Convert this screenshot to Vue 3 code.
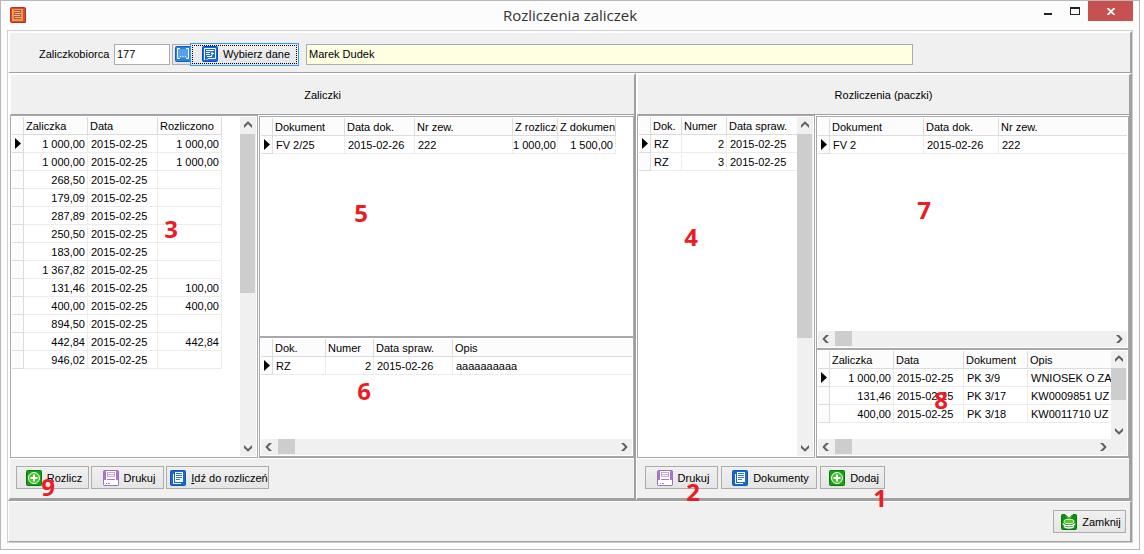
<script setup>
import { h } from 'vue'

const advances = {
  cols: [
    { t: 'Zaliczka', w: 64, r: true }, { t: 'Data', w: 70 }, { t: 'Rozliczono', w: 64, r: true },
  ],
  rows: [
    ['1 000,00', '2015-02-25', '1 000,00'],
    ['1 000,00', '2015-02-25', '1 000,00'],
    ['268,50', '2015-02-25', ''],
    ['179,09', '2015-02-25', ''],
    ['287,89', '2015-02-25', ''],
    ['250,50', '2015-02-25', ''],
    ['183,00', '2015-02-25', ''],
    ['1 367,82', '2015-02-25', ''],
    ['131,46', '2015-02-25', '100,00'],
    ['400,00', '2015-02-25', '400,00'],
    ['894,50', '2015-02-25', ''],
    ['442,84', '2015-02-25', '442,84'],
    ['946,02', '2015-02-25', ''],
  ],
}
const advanceDocs = {
  cols: [
    { t: 'Dokument', w: 72 }, { t: 'Data dok.', w: 70 }, { t: 'Nr zew.', w: 98 },
    { t: 'Z rozlicze', w: 45, r: true }, { t: 'Z dokumen', w: 58, r: true },
  ],
  rows: [['FV 2/25', '2015-02-26', '222', '1 000,00', '1 500,00']],
}
const advanceReports = {
  cols: [
    { t: 'Dok.', w: 53 }, { t: 'Numer', w: 48, r: true }, { t: 'Data spraw.', w: 79 }, { t: 'Opis', w: 0 },
  ],
  rows: [['RZ', '2', '2015-02-26', 'aaaaaaaaaa']],
}
const batches = {
  cols: [{ t: 'Dok.', w: 31 }, { t: 'Numer', w: 45, r: true }, { t: 'Data spraw.', w: 0 }],
  rows: [['RZ', '2', '2015-02-25'], ['RZ', '3', '2015-02-25']],
}
const batchDocs = {
  cols: [{ t: 'Dokument', w: 94 }, { t: 'Data dok.', w: 75 }, { t: 'Nr zew.', w: 0 }],
  rows: [['FV 2', '2015-02-26', '222']],
}
const batchAdvances = {
  cols: [
    { t: 'Zaliczka', w: 64, r: true }, { t: 'Data', w: 70 }, { t: 'Dokument', w: 64 }, { t: 'Opis', w: 0 },
  ],
  rows: [
    ['1 000,00', '2015-02-25', 'PK 3/9', 'WNIOSEK O ZA'],
    ['131,46', '2015-02-25', 'PK 3/17', 'KW0009851 UZ'],
    ['400,00', '2015-02-25', 'PK 3/18', 'KW0011710 UZ'],
  ],
}

const marks = [
  { n: 1, x: 879, y: 497 }, { n: 2, x: 692, y: 491 }, { n: 3, x: 170, y: 228 },
  { n: 4, x: 690, y: 236 }, { n: 5, x: 360, y: 212 }, { n: 6, x: 363, y: 390 },
  { n: 7, x: 923, y: 209 }, { n: 8, x: 940, y: 399 }, { n: 9, x: 47, y: 486 },
]

function DataGrid({ data, label }) {
  const fluid = data.cols.some((c) => !c.w)
  const total = data.cols.reduce((s, c) => s + c.w, 12)
  return h('table', { class: ['tbl', { fluid }], 'aria-label': label, style: fluid ? null : { width: total + 'px' } }, [
    h('colgroup', [
      h('col', { class: 'ind' }),
      ...data.cols.map((c) => h('col', { style: c.w ? { width: c.w + 'px' } : null })),
    ]),
    h('thead', h('tr', [h('td', { class: 'mark-cell' }), ...data.cols.map((c) => h('th', { scope: 'col' }, c.t))])),
    h('tbody', data.rows.map((row, i) => h('tr', [
      h('td', { class: 'mark-cell' }, i === 0
        ? h('svg', { width: 11, height: 17, viewBox: '0 0 11 17' }, h('path', { d: 'M3 3v11l6-5.5z', fill: '#000' }))
        : ''),
      ...row.map((v, j) => h('td', { class: { num: data.cols[j].r } }, v)),
    ]))),
  ])
}
DataGrid.props = ['data', 'label']

const arrows = {
  up: 'M4 10.500 8 6.500l4 4v-3L8 3.800 4 7.500z',
  down: 'M4 5.500 8 9.500l4-4v3L8 12.200 4 8.500z',
  left: 'M10.500 4 6.500 8l4 4h-3L3.800 8 7.500 4z',
  right: 'M5.500 4 9.500 8l-4 4h3L12.200 8 8.500 4z',
}
function ScrollBar({ dir, size }) {
  const v = dir === 'v'
  const arrow = (d) => h('svg', { class: 'arrow', width: 16, height: 16, viewBox: '0 0 16 16' }, h('path', { d: arrows[d], fill: '#606060' }))
  return h('div', { class: ['sb', dir] }, [
    arrow(v ? 'up' : 'left'),
    h('div', { class: 'lane' }, h('div', { class: 'thumb', style: v ? { height: size } : { width: size } })),
    arrow(v ? 'down' : 'right'),
  ])
}
ScrollBar.props = ['dir', 'size']

function Icon({ name }) {
  const box = (c, edge) => h('rect', { x: 0.5, y: 0.5, width: 15, height: 15, rx: 1, fill: c, stroke: edge })
  const line = (d, s, w = 1) => h('path', { d, stroke: s, 'stroke-width': w, fill: 'none' })
  const parts = {
    add: [
      box('#18a018', '#087808'),
      h('circle', { cx: 8, cy: 8, r: 5.5, fill: '#4cc02c', stroke: '#fff' }),
      line('M8 4.500v7M4.500 8h7', '#fff', 2),
    ],
    print: [
      box('#a878c8', '#a070c0'),
      h('path', { d: 'M3 1h10v8H3z', fill: '#fff' }),
      h('path', { d: 'M4 2h8v5H4z', fill: '#c8a8dc' }),
      line('M5 3.500h6M5 5.500h6', '#fff'),
      h('path', { d: 'M1 10h2V9h1v1h8V9h1v1h2v5H1z', fill: '#fff' }),
      line('M3 13.500h1M5 13.500h2', '#a878c8'),
    ],
    docs: [
      box('#1868d0', '#0c58c0'),
      h('path', { d: 'M5 2h8v10H5z', fill: '#fff' }),
      line('M6 3.500h6M6 5.500h6M6 7.500h6M6 9.500h4', '#2878e0'),
      line('M3.500 4v9.500H11', '#fff'),
    ],
    pick: [
      box('#2880e0', '#1060c0'),
      h('rect', { x: 2, y: 3, width: 12, height: 9, fill: '#58a0e8' }),
      line('M5 2.500H2.500v10H5M11 2.500h2.500v10H11', '#fff'),
      line('M5 10.500h1M7.500 10.500h1M10 10.500h1', '#fff'),
    ],
    choose: [
      box('#1868d8', '#0850b8'),
      line('M2.500 14V2.500h11v10H6L4.500 14', '#fff'),
      line('M4 4.500h8M4 6.500h4M9 7.500h3M4 8.500h4M5 10.500h5', '#fff'),
      line('M9 5.500l2 2-2 2.500', '#fff'),
    ],
    close: [
      box('#109010', '#087808'),
      h('path', { d: 'M4 0h8L9.500 3.500h-3z', fill: '#fff' }),
      line('M5 1l3 3 3-3', '#48b838'),
      h('ellipse', { cx: 8, cy: 7.5, rx: 5, ry: 2.3, fill: '#54cc20', stroke: '#fff' }),
      line('M2 9.500c1 3 11 3 12 0M3 12.500c2 2 8 2 10 0', '#fff', 1.3),
    ],
    app: [
      h('path', { d: 'M2 1h14v15H2z', fill: '#8a6060' }),
      box('#d84838', '#b83030'),
      h('path', { d: 'M2 2h11v12H2z', fill: '#f0a030' }),
      h('path', { d: 'M4 3h7v9H4z', fill: '#b85048' }),
      line('M4 4.500h6M5 6.500h6M4 8.500h6M5 10.500h6', '#e8b890'),
    ],
  }
  return h('svg', { class: 'icon', width: 16, height: 16, viewBox: '0 0 16 16', 'aria-hidden': 'true' }, parts[name])
}
Icon.props = ['name']
</script>

<template>
  <div class="window">
    <header class="titlebar">
      <Icon name="app" />
      <h1>Rozliczenia zaliczek</h1>
      <div class="controls">
        <button type="button" aria-label="Minimalizuj">
          <svg width="8" height="2"><path d="M0 0h8v2H0z" fill="#222" /></svg>
        </button>
        <button type="button" aria-label="Maksymalizuj">
          <svg width="10" height="8"><path d="M0 0h10v8H0zM1 2v5h8V2z" fill="#222" fill-rule="evenodd" /></svg>
        </button>
        <button type="button" class="x" aria-label="Zamknij okno">
          <svg width="8" height="7"><path d="M.5 0 7.500 7M7.500 0 .5 7" stroke="#fff" stroke-width="1.800" /></svg>
        </button>
      </div>
    </header>

    <main class="client">
      <section class="toolbar">
        <label for="person">Zaliczkobiorca</label>
        <input id="person" class="code" type="text" value="177">
        <button type="button" class="btn pick" aria-label="Wyszukaj"><Icon name="pick" /></button>
        <button type="button" class="btn choose"><Icon name="choose" /><span>Wybierz dane</span></button>
        <input class="name" type="text" aria-label="Nazwa" value="Marek Dudek" readonly>
      </section>

      <div class="panels">
        <section class="panel left">
          <h2>Zaliczki</h2>
          <div class="grids">
            <div class="frame main-grid">
              <div class="view">
                <div class="cells"><DataGrid :data="advances" label="Zaliczki" /></div>
                <ScrollBar dir="v" size="52%" />
              </div>
            </div>
            <div class="stack">
              <div class="frame docs-grid">
                <div class="cells"><DataGrid :data="advanceDocs" label="Dokumenty zaliczki" /></div>
              </div>
              <div class="frame low-grid">
                <div class="cells"><DataGrid :data="advanceReports" label="Sprawozdania" /></div>
                <ScrollBar dir="h" size="17px" />
              </div>
            </div>
          </div>
          <div class="actions">
            <button type="button" class="btn std"><Icon name="add" /><span>Rozlicz</span></button>
            <button type="button" class="btn std"><Icon name="print" /><span>Drukuj</span></button>
            <button type="button" class="btn goto"><Icon name="docs" /><span><u>I</u>dź do rozliczeń</span></button>
          </div>
        </section>

        <section class="panel right">
          <h2>Rozliczenia (paczki)</h2>
          <div class="grids">
            <div class="frame main-grid">
              <div class="view">
                <div class="cells"><DataGrid :data="batches" label="Paczki" /></div>
                <ScrollBar dir="v" size="67%" />
              </div>
            </div>
            <div class="stack">
              <div class="frame docs-grid">
                <div class="cells"><DataGrid :data="batchDocs" label="Dokumenty paczki" /></div>
                <ScrollBar dir="h" size="17px" />
              </div>
              <div class="frame low-grid">
                <div class="view">
                  <div class="cells"><DataGrid :data="batchAdvances" label="Zaliczki paczki" /></div>
                  <ScrollBar dir="v" size="60%" />
                </div>
                <ScrollBar dir="h" size="17px" class="cornered" />
              </div>
            </div>
          </div>
          <div class="actions">
            <button type="button" class="btn std"><Icon name="print" /><span>Drukuj</span></button>
            <button type="button" class="btn wide"><Icon name="docs" /><span>Dokumenty</span></button>
            <button type="button" class="btn add"><Icon name="add" /><span>Dodaj</span></button>
          </div>
        </section>
      </div>

      <footer class="bottom">
        <button type="button" class="btn std"><Icon name="close" /><span>Zamknij</span></button>
      </footer>
    </main>

    <span v-for="m in marks" :key="m.n" class="mark" :style="{ left: m.x + 'px', top: m.y + 'px' }">{{ m.n }}</span>
  </div>
</template>

<style>
body { background: #fff; }
</style>

<style scoped>
.window, .window :deep(*) { box-sizing: border-box; }
.window {
  position: relative;
  display: flex;
  flex-direction: column;
  min-height: calc(100vh - 4px);
  margin-right: 4px;
  border: 1px solid #b8b8b8;
  background: #fcfcfc;
  color: #000;
  font: 11px/14px "Liberation Sans", Arial, sans-serif;
}
button, input { font: inherit; color: inherit; margin: 0; border-radius: 0; }
svg { display: block; flex: none; }

.titlebar { display: grid; grid-template-columns: 1fr auto 1fr; height: 29px; padding: 0 6px 0 6px; }
.titlebar > .icon { margin: 6px 0 0 3px; overflow: visible; }
.titlebar h1 { margin: 0; font: 400 15px/28px "Open Sans", "Noto Sans", sans-serif; color: #333; }
.controls { display: flex; justify-content: flex-end; align-items: flex-start; }
.controls button {
  display: flex; align-items: center; justify-content: center;
  width: 27px; height: 20px; padding: 0; border: 0; background: none;
}
.controls button:first-child { align-items: flex-end; padding-bottom: 6px; }
.controls .x { width: 45px; background: #c75050; }

.client {
  flex: 1; display: flex; flex-direction: column;
  margin: 0 6px 6px; border: 1px solid #d0d0d0; background: #f0f0f0;
}
.toolbar {
  display: flex; align-items: center; height: 42px; padding: 3px 217px 0 29px;
  border: solid #fff; border-width: 2px 2px 1px 2px; border-right-color: #a0a0a0; border-bottom-color: #a0a0a0;
}
.toolbar input { height: 21px; padding: 0 2px; border: 1px solid #abadb3; background: #fff; outline: 0; }
.toolbar .code { width: 56px; margin: 0 2px 0 5px; }
.toolbar .name { flex: 1; min-width: 0; margin-left: 7px; background: #ffffe1; }
.toolbar label { width: 70px; white-space: nowrap; }

.btn {
  display: flex; align-items: center; justify-content: center; gap: 5px;
  height: 23px; padding: 0 0 0 3px; border: 1px solid #acacac; white-space: nowrap;
  background: linear-gradient(#f0f0f0, #e5e5e5);
}
.pick { width: 24px; height: 21px; margin-right: -6px; padding: 0 2px 0 0; }
.choose { position: relative; width: 109px; border-color: #3399ff; outline: 1px dotted #000; outline-offset: -3px; }
.std { width: 73px; }
.goto { width: 103px; }
.wide { width: 96px; }
.add { width: 65px; }

.panels { flex: 1; display: grid; grid-template-columns: 628fr 496fr; min-height: 0; }
.panel {
  display: flex; flex-direction: column; min-width: 0;
  border: solid #a0a0a0; border-width: 2px 2px 3px; border-top-color: #fff; border-left-color: #fff;
}
.panel.right { border-left-width: 1px; border-right-width: 3px; }
.panel h2 {
  height: 40px; margin: 0; border-left: 1px solid #fff; border-bottom: 1px solid #a0a0a0;
  font: inherit; line-height: 40px; text-align: center;
}
.grids { flex: 1; display: grid; gap: 1px; min-height: 0; background: #fff; }
.left .grids { grid-template-columns: 248px minmax(0, 1fr); }
.right .grids { grid-template-columns: 178px minmax(0, 1fr); }
.stack { display: flex; flex-direction: column; padding-top: 1px; border-bottom: 1px solid #a0a0a0; min-width: 0; }
.frame { display: flex; flex-direction: column; min-width: 0; padding: 1px; border: 1px solid #a7a7ad; background: #fff; }
.docs-grid { flex: 1; }
.left .low-grid { height: 120px; }
.right .low-grid { height: 108px; }
.view { flex: 1; display: flex; min-height: 0; }
.cells { flex: 1; min-width: 0; min-height: 0; overflow: hidden; }

.window :deep(.tbl) { table-layout: fixed; border-collapse: separate; border-spacing: 0; }
.window :deep(.tbl.fluid) { width: 100%; }
.window :deep(.tbl .ind) { width: 12px; }
.window :deep(.tbl td), .window :deep(.tbl th) {
  height: 18px; padding: 2px 0 0 3px; border: solid #ececec; border-width: 0 1px 1px 0;
  overflow: hidden; white-space: nowrap; text-align: left; font-weight: 400; line-height: 15px;
}
.window :deep(.tbl th) { padding-left: 2px; border-color: #dcdcdc; background: #fcfcfc; }
.window :deep(.tbl.fluid tr > :last-child) { border-right: 0; }
.window :deep(.tbl .num) { padding: 2px 2px 0 0; text-align: right; }
.window :deep(.tbl .mark-cell) { padding: 0; border-color: #dcdcdc; background: #fcfcfc; }
.window :deep(.tbl svg) { display: block; }

.window :deep(.sb) { display: flex; flex: none; background: #f0f0f0; }
.window :deep(.sb.v) { flex-direction: column; width: 16px; }
.window :deep(.sb.h) { height: 16px; }
.window :deep(.sb.cornered) { padding-right: 16px; }
.window :deep(.arrow) { display: block; flex: none; }
.window :deep(.v > .arrow) { height: 17px; }
.window :deep(.h > .arrow) { width: 17px; }
.window :deep(.lane) { flex: 1; min-height: 0; min-width: 0; }
.window :deep(.thumb) { background: #cdcdcd; }
.window :deep(.v .thumb) { width: 15px; }
.window :deep(.h .thumb) { height: 15px; }

.actions {
  display: flex; gap: 2px; height: 40px; padding: 7px 0 0 6px;
  border-top: 1px solid #fff;
}
.right .actions { gap: 3px; padding-left: 8px; }
.bottom {
  display: flex; align-items: center; justify-content: flex-end; height: 41px; padding-right: 4px;
  border: solid #fff; border-width: 1px 2px 1px 1px; border-right-color: #a0a0a0; border-bottom-color: #a0a0a0;
}
.mark {
  position: absolute; transform: translate(-50%, -50%); pointer-events: none;
  color: #ed1c24; font: 700 24px/24px "Open Sans", "Noto Sans", sans-serif;
}
</style>
